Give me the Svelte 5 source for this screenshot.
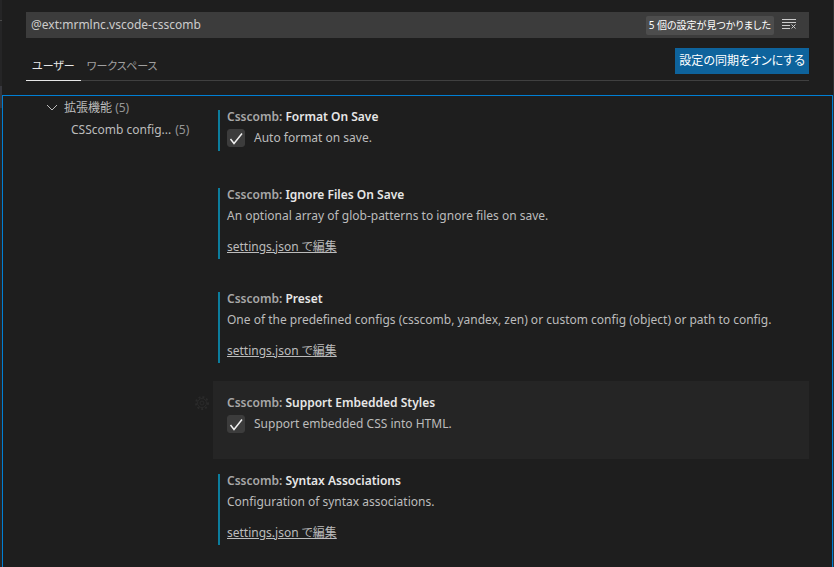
<script lang="ts">
  type Setting = {
    id: string;
    label: string;
    description: string;
    kind: 'check' | 'json';
    modified: boolean;
    focused?: boolean;
  };

  let query = $state('@ext:mrmlnc.vscode-csscomb');
  let activeTab = $state('ユーザー');

  const tabs = ['ユーザー', 'ワークスペース'];

  // 拡張機能が提供する設定の一覧
  const settings: Setting[] = [
    {
      id: 'format-on-save',
      label: 'Format On Save',
      description: 'Auto format on save.',
      kind: 'check',
      modified: true
    },
    {
      id: 'ignore-files',
      label: 'Ignore Files On Save',
      description: 'An optional array of glob-patterns to ignore files on save.',
      kind: 'json',
      modified: true
    },
    {
      id: 'preset',
      label: 'Preset',
      description:
        'One of the predefined configs (csscomb, yandex, zen) or custom config (object) or path to config.',
      kind: 'json',
      modified: true
    },
    {
      id: 'embedded-styles',
      label: 'Support Embedded Styles',
      description: 'Support embedded CSS into HTML.',
      kind: 'check',
      modified: false,
      focused: true
    },
    {
      id: 'syntax-associations',
      label: 'Syntax Associations',
      description: 'Configuration of syntax associations.',
      kind: 'json',
      modified: true
    }
  ];
</script>

<div class="window">
  <!-- サイドバーの右端 -->
  <div class="sash">
    <div class="divider"></div>
    <div class="selection"></div>
  </div>
  <main class="editor">
    <header>
      <div class="search">
        <input type="text" aria-label="設定の検索" bind:value={query} />
        <span class="count">5 個の設定が見つかりました</span>
        <button class="clear" aria-label="検索結果をクリア" onclick={() => (query = '')}>
          <svg width="16" height="16" viewBox="0 0 16 16">
            <path d="M1 2.5h14M1 5.5h14M1 8.5h8M1 11.5h8" />
            <path d="M10.5 7.5l4 4M14.5 7.5l-4 4" />
          </svg>
        </button>
      </div>
      <div class="scope">
        <nav>
          {#each tabs as tab}
            <button class="tab" class:active={tab === activeTab} onclick={() => (activeTab = tab)}>
              {tab}
            </button>
          {/each}
        </nav>
        <button class="sync">設定の同期をオンにする</button>
      </div>
    </header>

    <div class="body">
      <!-- 目次ツリー -->
      <aside>
        <a class="row" href="#extensions">
          <svg width="16" height="16" viewBox="0 0 16 16">
            <path d="M3 5l5 5 5-5" />
          </svg>
          <span>拡張機能 <span class="num">(5)</span></span>
        </a>
        <a class="row child" href="#csscomb">
          <span>CSScomb config...</span>
          <span class="num">(5)</span>
        </a>
      </aside>

      <!-- 設定リスト -->
      <section class="settings">
        {#each settings as item (item.id)}
          <article class="item {item.kind}" class:focused={item.focused}>
            {#if item.focused}
              <button class="gear" aria-label="その他の操作">
                <svg width="16" height="16" viewBox="0 0 16 16">
                  <circle cx="8" cy="8" r="2" />
                  <circle cx="8" cy="8" r="4.5" />
                  <circle class="teeth" cx="8" cy="8" r="6" />
                </svg>
              </button>
            {/if}
            <div class="content" class:modified={item.modified}>
              <h2><span>Csscomb:</span> {item.label}</h2>
              {#if item.kind === 'check'}
                <label class="line">
                  <input type="checkbox" checked />
                  <svg class="tick" width="18" height="18" viewBox="0 0 18 18">
                    <path d="M3.5 10l3.5 4.5L15 4.5" />
                  </svg>
                  {item.description}
                </label>
              {:else}
                <p class="line">{item.description}</p>
                <a class="line edit" href="#settings.json">settings.json で編集</a>
              {/if}
            </div>
          </article>
        {/each}
      </section>
    </div>
  </main>
</div>

<style>
  :global(body) {
    background: #1e1e1e;
  }

  .window {
    display: flex;
    min-height: 100vh;
    box-sizing: border-box;
    color: #bcbcbc;
    font-family: 'Noto Sans', 'Noto Sans CJK JP', sans-serif;
    font-size: 12px;
    line-height: 20px;
    font-feature-settings: 'palt';
  }

  button,
  input {
    font: inherit;
    font-feature-settings: inherit;
    color: inherit;
    margin: 0;
    padding: 0;
    border: 0;
    background: none;
  }

  button {
    cursor: pointer;
  }

  a {
    color: inherit;
    text-decoration: none;
  }

  svg {
    fill: none;
    stroke: currentColor;
  }

  .sash {
    width: 2px;
    padding-top: 20px;
    background: #252526;
  }

  .divider {
    height: 1px;
    margin-bottom: 65px;
    background: #4a4a4a;
  }

  .selection {
    height: 22px;
    background: #37373d;
  }

  .editor {
    flex: 1;
    min-width: 0;
    display: flex;
    flex-direction: column;
    border-right: 1px solid #303031;
  }

  header {
    padding: 12px 24px 14px;
  }

  /* 検索ボックス */
  .search {
    display: flex;
    align-items: center;
    height: 26px;
    padding: 0 12px 0 5px;
    background: #3c3c3c;
    color: #cccccc;
  }

  .search input {
    flex: 1;
    min-width: 0;
    outline: none;
  }

  .count {
    padding: 0 3px;
    border-radius: 2px;
    background: #4d4d4d;
    color: #ffffff;
    font-size: 10px;
    line-height: 19px;
  }

  .clear {
    display: flex;
    margin-left: 7px;
  }

  .scope {
    display: flex;
    align-items: flex-start;
    justify-content: space-between;
    margin-top: 10px;
    border-bottom: 1px solid #404040;
  }

  nav {
    display: flex;
    padding-top: 3px;
  }

  .tab {
    height: 30px;
    padding: 0 6px;
    margin-bottom: -1px;
    border-bottom: 1px solid transparent;
    color: #a0a0a0;
    font-size: 11px;
  }

  .tab.active {
    color: #e7e7e7;
    border-bottom-color: #e7e7e7;
  }

  .sync {
    height: 26px;
    padding: 0 4px;
    background: #0e639c;
    color: #ffffff;
  }

  .body {
    flex: 1;
    display: flex;
    padding-right: 23px;
    border: 1px solid #007fd4;
    border-bottom: 0;
  }

  /* 目次 */
  aside {
    flex: none;
    width: 210px;
    padding-top: 1px;
    box-sizing: border-box;
  }

  .row {
    display: flex;
    align-items: center;
    gap: 4px;
    height: 22px;
    padding-left: 41px;
  }

  .child {
    padding-left: 68px;
  }

  .num {
    color: #969696;
  }

  /* 先頭の項目を枠線に重ねる */
  .settings {
    flex: 1;
    min-width: 0;
    margin-top: -1px;
  }

  .item {
    position: relative;
    padding: 15px 5px 18px;
  }

  .item.check {
    padding-bottom: 22px;
  }

  .focused {
    background: #252525;
  }

  .content {
    padding: 0 0 2px 7px;
    border-left: 2px solid transparent;
  }

  .check .content {
    padding-bottom: 3px;
  }

  .modified {
    border-left-color: #0c7d9d;
  }

  h2 {
    margin: 0 0 4px;
    font-size: 12px;
    line-height: 14px;
    font-weight: 600;
    color: #e7e7e7;
  }

  h2 span {
    color: #a8a8a8;
  }

  .line {
    display: flex;
    align-items: center;
    margin: 0;
  }

  label {
    position: relative;
  }

  input[type='checkbox'] {
    appearance: none;
    width: 18px;
    height: 18px;
    margin-right: 9px;
    border: 1px solid #3c3c3c;
    border-radius: 3px;
    background: #3c3c3c;
  }

  .tick {
    position: absolute;
    left: 0;
    color: #f0f0f0;
    stroke-width: 1.5;
    visibility: hidden;
    pointer-events: none;
  }

  input:checked + .tick {
    visibility: visible;
  }

  .edit {
    display: inline-block;
    margin-top: 11px;
    text-decoration: underline;
    vertical-align: top;
  }

  /* 項目の左側に出る歯車 */
  .gear {
    position: absolute;
    left: -19px;
    top: 14px;
    display: flex;
    color: #2a2a2a;
  }

  .teeth {
    stroke-width: 2;
    stroke-dasharray: 2 2;
  }
</style>
